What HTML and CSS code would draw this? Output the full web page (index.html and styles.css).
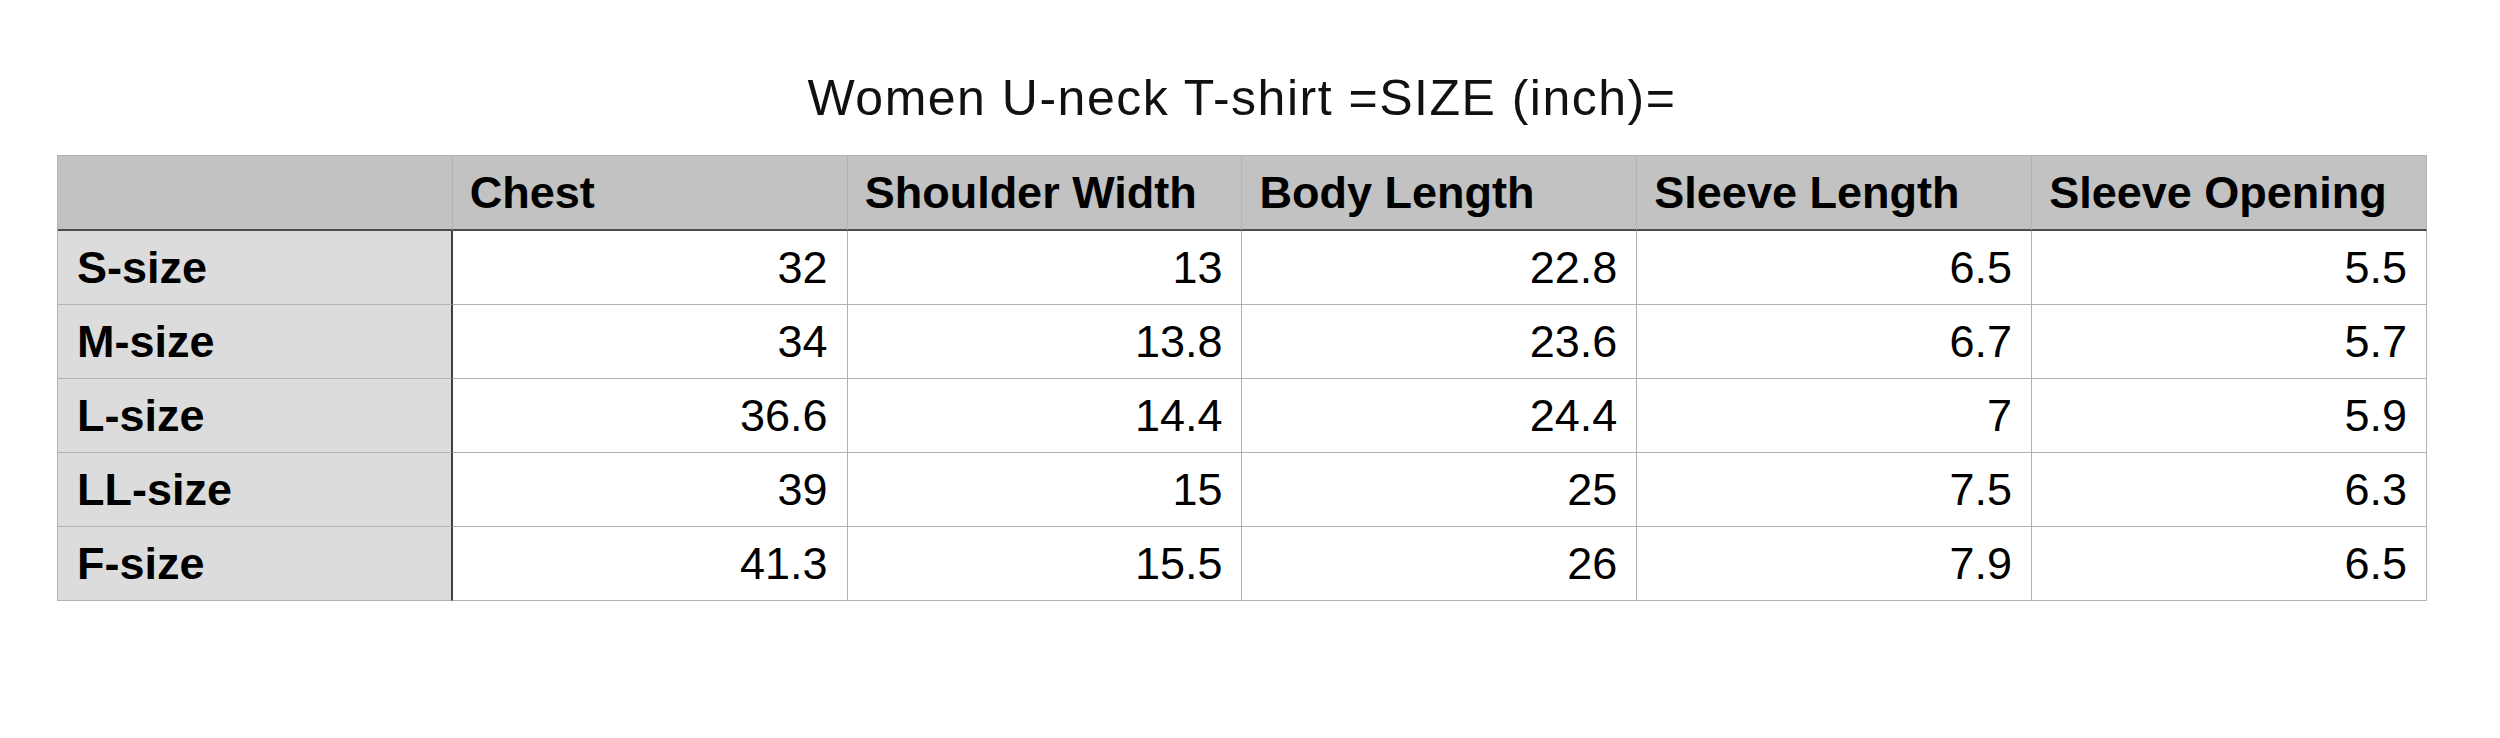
FILE: index.html
```html
<!DOCTYPE html>
<html lang="en">
<head>
<meta charset="utf-8">
<title>Women U-neck T-shirt =SIZE (inch)=</title>
<link rel="stylesheet" href="styles.css">
</head>
<body>
<div class="sheet">
  <h1 class="title">Women U-neck T-shirt =SIZE (inch)=</h1>
  <table class="size-table">
    <thead>
      <tr>
        <th class="corner"></th>
        <th>Chest</th>
        <th>Shoulder Width</th>
        <th>Body Length</th>
        <th>Sleeve Length</th>
        <th>Sleeve Opening</th>
      </tr>
    </thead>
    <tbody>
      <tr><th class="label">S-size</th><td>32</td><td>13</td><td>22.8</td><td>6.5</td><td>5.5</td></tr>
      <tr><th class="label">M-size</th><td>34</td><td>13.8</td><td>23.6</td><td>6.7</td><td>5.7</td></tr>
      <tr><th class="label">L-size</th><td>36.6</td><td>14.4</td><td>24.4</td><td>7</td><td>5.9</td></tr>
      <tr><th class="label">LL-size</th><td>39</td><td>15</td><td>25</td><td>7.5</td><td>6.3</td></tr>
      <tr><th class="label">F-size</th><td>41.3</td><td>15.5</td><td>26</td><td>7.9</td><td>6.5</td></tr>
    </tbody>
  </table>
</div>
</body>
</html>
```

FILE: styles.css
```css
html, body {
  margin: 0;
  padding: 0;
  background: #ffffff;
}

body {
  font-family: "Liberation Sans", Arial, sans-serif;
  color: #000000;
}

.sheet {
  width: 2370px;
  margin-left: 57px;
  padding-top: 68px;
}

.title {
  margin: 0 0 27px 0;
  height: 60px;
  font-size: 50px;
  line-height: 60px;
  font-weight: 400;
  letter-spacing: 1.5px;
  text-align: center;
  color: #111111;
}

.size-table {
  width: 2370px;
  table-layout: fixed;
  border-collapse: separate;
  border-spacing: 0;
  border-top: 1px solid #b3b3b3;
  border-left: 1px solid #b3b3b3;
}

.size-table th,
.size-table td {
  padding: 0;
  border-right: 1px solid #b3b3b3;
  border-bottom: 1px solid #b3b3b3;
  line-height: 73px;
  font-size: 45px;
  white-space: nowrap;
  overflow: hidden;
}

.size-table thead th {
  background: #c1c2c1;
  font-weight: 700;
  text-align: left;
  padding-left: 17px;
  border-bottom: 2px solid #4b4b4b;
}

.size-table thead th.corner {
  padding-left: 0;
}

.size-table tbody th.label {
  background: #dcdcdc;
  font-weight: 700;
  text-align: left;
  padding-left: 19px;
  border-right: 2px solid #404040;
}

.size-table tbody td {
  background: #ffffff;
  font-weight: 400;
  text-align: right;
  padding-right: 19px;
}
```
